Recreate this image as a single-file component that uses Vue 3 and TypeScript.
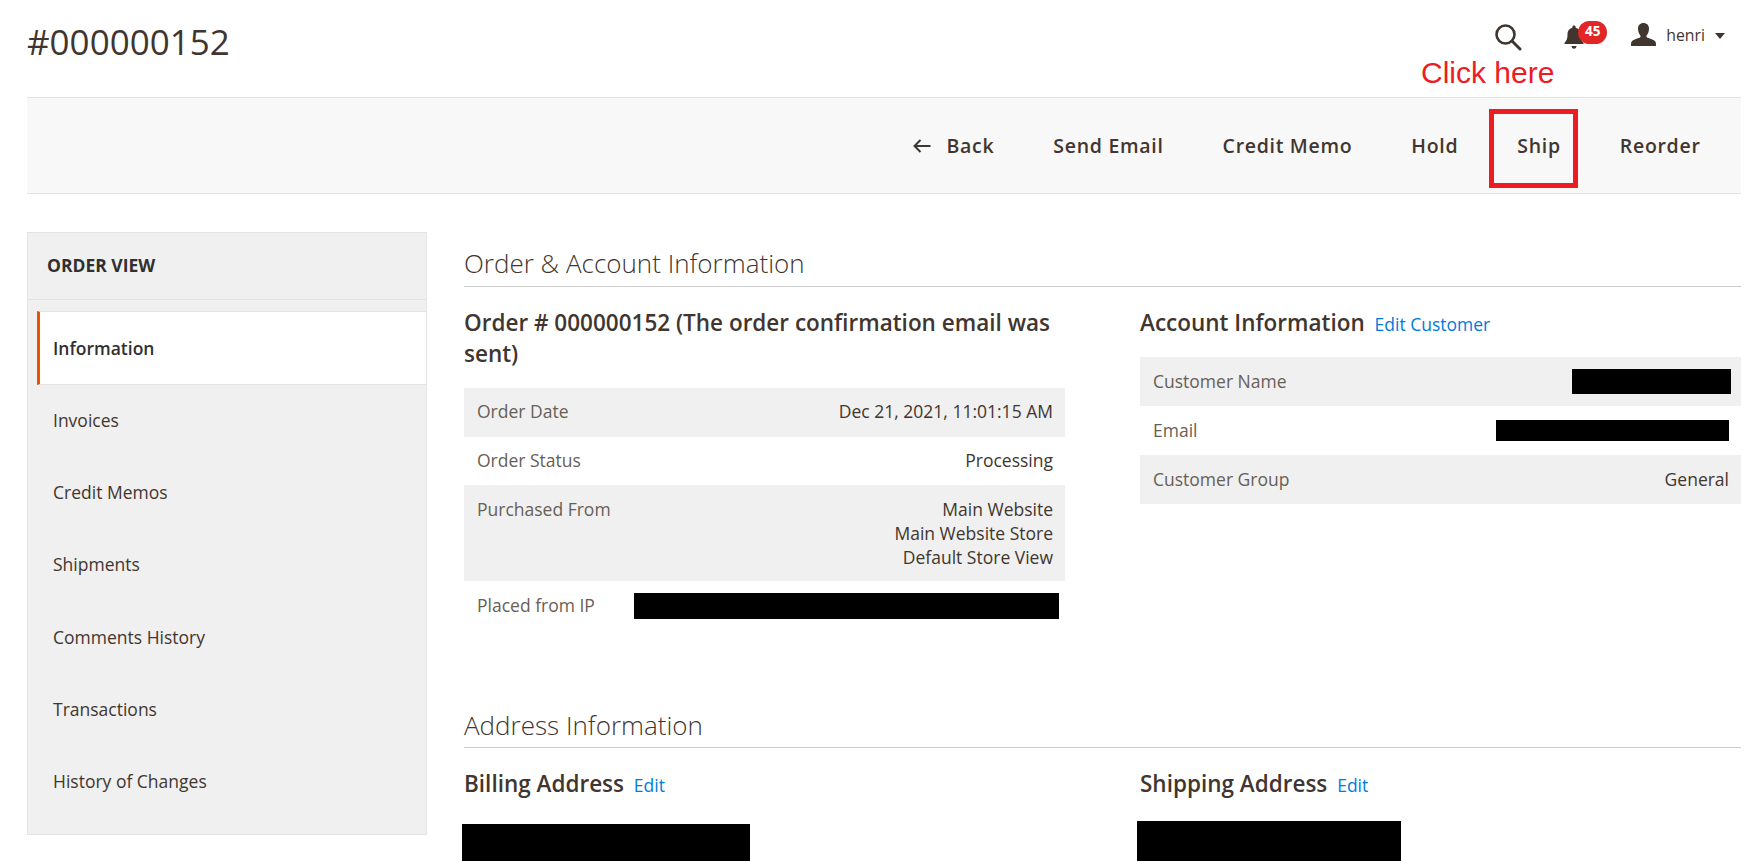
<script setup lang="ts">
const menu: string[] = ['Invoices', 'Credit Memos', 'Shipments', 'Comments History', 'Transactions', 'History of Changes']
const actions: string[] = ['Send Email', 'Credit Memo', 'Hold', 'Ship', 'Reorder']
</script>

<template>
  <div class="page">
    <header class="top">
      <h1 class="title">#000000152</h1>
      <div class="tools">
        <svg class="search" width="28" height="28" viewBox="0 0 28 28">
          <circle cx="11.5" cy="11.5" r="9" fill="none" stroke="#41362f" stroke-width="2.6" />
          <path d="M18 18 L26 26" stroke="#41362f" stroke-width="3" stroke-linecap="round" />
        </svg>
        <div class="bell">
          <svg width="22" height="26" viewBox="0 0 22 26">
            <path d="M11 1.5c1 0 1.7.7 1.7 1.7v.6c3.4.8 4.8 3.6 4.8 7 0 4 .9 6 3 8v1.2H1.500v-1.200c2.100-2 3-4 3-8 0-3.400 1.400-6.200 4.800-7v-.6c0-1 .7-1.700 1.700-1.700z" fill="#41362f" />
            <path d="M8.500 22h5c0 1.600-1.100 2.800-2.500 2.800S8.500 23.600 8.500 22z" fill="#41362f" />
          </svg>
          <span class="badge">45</span>
        </div>
        <div class="user">
          <svg width="25" height="23" viewBox="0 0 25 23">
            <path d="M12.500 0c3.400 0 5.500 2.300 5.500 5.600 0 2.600-.9 5.400-2.300 7 -.5.7-.4 1.500.4 1.900 2.600 1.200 6.900 2.100 8.400 4.200.5.800.5 2.400.5 4.300H0c0-1.900 0-3.500.5-4.300 1.500-2.100 5.800-3 8.400-4.200.8-.4.9-1.200.4-1.900-1.400-1.600-2.300-4.400-2.300-7C7 2.300 9.100 0 12.500 0z" fill="#41362f" />
          </svg>
          <span class="name">henri</span>
          <span class="caret"></span>
        </div>
      </div>
    </header>

    <div class="bar">
      <span class="btn back">
        <svg width="20" height="16" viewBox="0 0 20 16">
          <path d="M18.500 8H2.500M8.500 2L2.500 8l6 6" fill="none" stroke="#41362f" stroke-width="2" />
        </svg>
        Back
      </span>
      <span v-for="a in actions" :key="a" class="btn">{{ a }}</span>
    </div>

    <div class="note">Click here</div>
    <div class="mark"></div>

    <div class="body">
      <aside class="side">
        <div class="side-title">ORDER VIEW</div>
        <ul class="side-list">
          <li class="item active">Information</li>
          <li v-for="m in menu" :key="m" class="item">{{ m }}</li>
        </ul>
      </aside>

      <main class="main">
        <h2 class="sec">Order &amp; Account Information</h2>
        <div class="cols">
          <div>
            <h3 class="head">Order # 000000152 (The order confirmation email was sent)</h3>
            <div class="table">
              <div class="row"><span class="k">Order Date</span><span class="v">Dec 21, 2021, 11:01:15 AM</span></div>
              <div class="row"><span class="k">Order Status</span><span class="v">Processing</span></div>
              <div class="row tall">
                <span class="k">Purchased From</span>
                <span class="v">Main Website<br />Main Website Store<br />Default Store View</span>
              </div>
              <div class="row"><span class="k">Placed from IP</span><span class="black ip"></span></div>
            </div>
          </div>
          <div>
            <h3 class="head single">Account Information <a class="link">Edit Customer</a></h3>
            <div class="table acct">
              <div class="row"><span class="k">Customer Name</span><span class="black cname"></span></div>
              <div class="row"><span class="k">Email</span><span class="black email"></span></div>
              <div class="row"><span class="k">Customer Group</span><span class="v">General</span></div>
            </div>
          </div>
        </div>

        <h2 class="sec sec2">Address Information</h2>
        <div class="cols">
          <div>
            <h3 class="head addr">Billing Address <a class="link">Edit</a></h3>
            <div class="black bill"></div>
          </div>
          <div>
            <h3 class="head addr">Shipping Address <a class="link">Edit</a></h3>
            <div class="black shipto"></div>
          </div>
        </div>
      </main>
    </div>
  </div>
</template>

<style>
html, body { margin: 0; overflow: hidden; background: #fff; }
</style>

<style scoped>
.page {
  position: relative;
  height: 861px;
  overflow: hidden;
  padding: 0 12px 0 27px;
  font-family: "Open Sans", sans-serif;
  color: #41362f;
  font-size: 17.5px;
}
.top {
  height: 97px;
  display: flex;
  justify-content: space-between;
  align-items: flex-start;
}
.title {
  margin: 18px 0 0;
  font-size: 35px;
  line-height: 48px;
  font-weight: 400;
}
.tools {
  display: flex;
  align-items: flex-start;
  margin-right: 16px;
  padding-top: 22px;
}
.search { display: block; margin-top: 1px; }
.bell {
  position: relative;
  margin-left: 41px;
  width: 42px;
  height: 28px;
}
.bell svg { display: block; margin-top: 2px; }
.badge {
  position: absolute;
  left: 15px;
  top: -1px;
  width: 29px;
  height: 23px;
  border-radius: 12px;
  background: #e22626;
  color: #fff;
  font-size: 13.500px;
  font-weight: 700;
  line-height: 21px;
  text-align: center;
}
.user {
  display: flex;
  align-items: center;
  margin-left: 26px;
  height: 25px;
}
.user svg { display: block; }
.name {
  margin-left: 10px;
  font-size: 15.8px;
  line-height: 20px;
}
.caret {
  margin-left: 10px;
  border-left: 5px solid transparent;
  border-right: 5px solid transparent;
  border-top: 6px solid #41362f;
  margin-top: 2px;
}
.bar {
  height: 95px;
  background: #f8f8f8;
  border-top: 1px solid #e3e3e3;
  border-bottom: 1px solid #e3e3e3;
  display: flex;
  align-items: center;
  justify-content: flex-end;
  gap: 59px;
  padding-right: 40.5px;
}
.btn {
  font-size: 19.5px;
  font-weight: 600;
  letter-spacing: 0.7px;
  line-height: 26px;
  white-space: nowrap;
}
.back {
  display: flex;
  align-items: center;
  gap: 15px;
}
.back svg { display: block; }
.note {
  position: absolute;
  left: 1421px;
  top: 55px;
  font-family: "Liberation Sans", Arial, sans-serif;
  font-size: 30px;
  line-height: 36px;
  color: #ed1c24;
}
.mark {
  position: absolute;
  left: 1489px;
  top: 109px;
  width: 89px;
  height: 79px;
  box-sizing: border-box;
  border: 5px solid #ed1c24;
}
.body {
  display: flex;
  margin-top: 38px;
}
.side {
  flex: 0 0 400px;
  height: 603px;
  box-sizing: border-box;
  background: #f0f0f0;
  border: 1px solid #e3e3e3;
}
.side-title {
  height: 67px;
  box-sizing: border-box;
  border-bottom: 1px solid #e3e3e3;
  padding-left: 19px;
  font-size: 17.5px;
  font-weight: 700;
  line-height: 65px;
  color: #303030;
}
.side-list {
  list-style: none;
  margin: 11px 0 0;
  padding: 0;
}
.item {
  height: 72.2px;
  line-height: 70px;
  padding-left: 25px;
  box-sizing: border-box;
  color: #41362f;
}
.active {
  margin-left: 9px;
  padding-left: 13px;
  height: 74px;
  background: #fff;
  border-top: 1px solid #e3e3e3;
  border-bottom: 1px solid #e3e3e3;
  border-left: 3px solid #eb5202;
  font-weight: 600;
  color: #303030;
  line-height: 72px;
}
.main {
  flex: 1;
  margin-left: 37px;
  min-width: 0;
}
.sec {
  margin: 0;
  padding: 15px 0 7px;
  font-size: 26px;
  line-height: 32px;
  font-weight: 300;
  color: #41362f;
  border-bottom: 1px solid #cccccc;
}
.sec2 { margin-top: 63px; padding: 16px 0 6px; }
.cols {
  display: grid;
  grid-template-columns: 601px 601px;
  column-gap: 75px;
}
.head {
  margin: 20px 0 19px;
  font-size: 22.5px;
  line-height: 31px;
  font-weight: 600;
  color: #41362f;
}
.single { margin-bottom: 17px; }
.addr { margin-bottom: 23px; }
.link {
  margin-left: 4px;
  font-size: 17.5px;
  font-weight: 400;
  color: #007bdb;
}
.table { display: flex; flex-direction: column; }
.row {
  display: flex;
  justify-content: space-between;
  align-items: center;
  min-height: 48.7px;
  box-sizing: border-box;
  padding: 0 12px 2px 13px;
  line-height: 24px;
}
.acct .row {
  min-height: 48.900px;
  padding-bottom: 1px;
}
.row:nth-child(odd) { background: #f0f0f0; }
.tall {
  align-items: flex-start;
  padding-top: 11.5px;
  padding-bottom: 12.5px;
}
.k { color: #675f56; }
.v { text-align: right; color: #41362f; }
.black { display: block; background: #000; }
.ip { width: 425px; height: 26px; margin-right: -6px; margin-top: 2px; }
.cname { width: 159px; height: 25px; margin-right: -2px; margin-top: 1px; }
.email { width: 233px; height: 21px; margin-top: 1px; }
.bill { width: 288px; height: 60px; margin-left: -2px; }
.shipto { width: 264px; height: 60px; margin-left: -3px; margin-top: -3px; }
</style>
